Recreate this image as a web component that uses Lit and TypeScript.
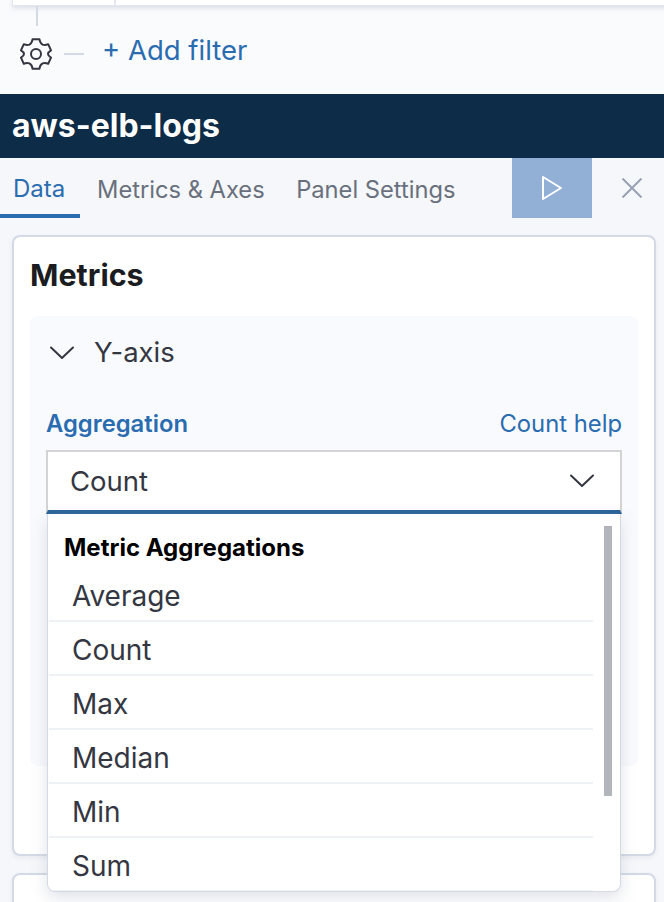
import { LitElement, css, html } from 'lit';
import { customElement } from 'lit/decorators.js';

const chevron = () => html`<svg viewBox="0 0 24 14" fill="none" stroke="currentColor" stroke-width="2" stroke-linecap="round" stroke-linejoin="round">
  <path d="M1 1.5 L12 12 L23 1.5"></path>
</svg>`;

const options = ['Average', 'Count', 'Max', 'Median', 'Min', 'Sum'];

@customElement('app-root')
export class AppRoot extends LitElement {
  static styles = css`
    :host {
      display: block;
      height: 902px;
      overflow: hidden;
      background: #f5f7fa;
      font-family: Inter, 'Liberation Sans', sans-serif;
      color: #343741;
    }

    .top {
      background: #fafbfd;
      height: 94px;
      overflow: hidden;
    }

    .query {
      display: flex;
      height: 5px;
      margin-left: 12px;
      margin-right: -20px;
      background: #ffffff;
      border: 1px solid #e4e7ee;
      border-top: none;
      box-shadow: 0 2px 5px rgba(152, 162, 179, 0.35);
    }

    .query i {
      width: 101px;
      border-right: 2px solid #e4e7ee;
    }

    .stem {
      width: 2px;
      height: 20px;
      margin-left: 36px;
      background: #d3dae6;
    }

    .filters {
      display: flex;
      align-items: center;
      height: 56px;
      padding-left: 20px;
    }

    .gear {
      width: 32px;
      height: 32px;
      color: #343741;
    }

    .dash {
      width: 20px;
      height: 2px;
      margin: 0 18px 0 12px;
      background: #d3dae6;
    }

    .add {
      font-size: 27.5px;
      color: #2a6cb0;
      margin-top: -8px;
    }

    .title {
      box-sizing: border-box;
      height: 64px;
      display: flex;
      align-items: center;
      padding: 0 0 2px 12px;
      background: #0d2c48;
      color: #ffffff;
      font-size: 32px;
      font-weight: 700;
    }

    .tabs {
      display: flex;
      height: 60px;
    }

    .tab {
      display: flex;
      align-items: center;
      height: 60px;
      box-sizing: border-box;
      padding: 2px 16.5px 0 0;
      font-size: 23.7px;
      color: #69707d;
    }

    .tab.active {
      width: 80px;
      padding: 4px 0 0 13px;
      margin-right: 17px;
      font-size: 24px;
      color: #2a6cb0;
      border-bottom: 4px solid #2a6cb0;
    }

    .tab.settings {
      margin-left: 15px;
    }

    .run {
      display: flex;
      align-items: center;
      justify-content: center;
      width: 80px;
      margin-left: auto;
      background: #92b0d6;
    }

    .run svg {
      width: 22px;
      height: 26px;
    }

    .close {
      display: flex;
      align-items: center;
      justify-content: center;
      width: 80px;
      margin-right: -8px;
      color: #98a2b3;
    }

    .close svg {
      width: 20px;
      height: 20px;
    }

    .body {
      position: relative;
      padding: 17px 8px 0 12px;
    }

    .card {
      box-sizing: border-box;
      background: #ffffff;
      border: 2px solid #d3dae6;
      border-radius: 8px;
      box-shadow: 0 2px 4px rgba(152, 162, 179, 0.15);
      padding: 0 16px;
      height: 621px;
    }

    .card + .card {
      margin-top: 17px;
    }

    h2 {
      margin: 0;
      font-size: 30.5px;
      font-weight: 700;
      color: #1a1c21;
    }

    .card > h2 {
      height: 79px;
      line-height: 76px;
    }

    .panel {
      box-sizing: border-box;
      height: 450px;
      padding: 0 16px;
      background: #f9fafd;
      border-radius: 8px;
    }

    .panel-head {
      display: flex;
      align-items: center;
      height: 72px;
      font-size: 27.5px;
    }

    .panel-head svg {
      width: 24px;
      height: 14px;
      margin: 2px 20px 0 4px;
    }

    .row {
      display: flex;
      justify-content: space-between;
      align-items: center;
      height: 62px;
      padding-top: 8px;
      box-sizing: border-box;
      font-size: 23.8px;
      color: #2a6cb0;
    }

    .label {
      font-weight: 600;
    }

    .select {
      box-sizing: border-box;
      display: flex;
      align-items: center;
      justify-content: space-between;
      height: 64px;
      padding: 0 26px 0 22px;
      background: #ffffff;
      border: 2px solid #d3d3d3;
      border-bottom: 4px solid #2a6399;
      font-size: 27.5px;
    }

    .select svg {
      width: 24px;
      height: 14px;
    }

    .menu {
      position: absolute;
      left: 47px;
      top: 296px;
      box-sizing: border-box;
      width: 574px;
      height: 378px;
      padding: 12px 0 0 1px;
      background: #ffffff;
      border: solid #d3dae6;
      border-width: 0 1px 1px 1px;
      border-radius: 0 0 8px 8px;
      box-shadow: 0 6px 16px rgba(152, 162, 179, 0.3);
      overflow: hidden;
    }

    .menu h3 {
      margin: 0 0 0 15px;
      height: 42px;
      line-height: 44px;
      font-size: 24px;
      font-weight: 700;
      color: #000000;
    }

    .option {
      display: flex;
      align-items: center;
      box-sizing: border-box;
      width: 544px;
      height: 54px;
      padding: 4px 0 0 23px;
      font-size: 28px;
      border-bottom: 2px solid #eef1f6;
    }

    .thumb {
      position: absolute;
      right: 8px;
      top: 12px;
      width: 8px;
      height: 270px;
      background: #b2b5bc;
    }

    .next {
      padding-top: 12px;
    }
  `;

  render() {
    return html`
      <div class="top">
        <div class="query"><i></i></div>
        <div class="stem"></div>
        <div class="filters">
          <svg class="gear" viewBox="0 0 32 32" fill="none" stroke="currentColor" stroke-width="2" stroke-linejoin="round">
            <path d="M12.6 1.2 L19.4 1.2 C19.8 4 20.6 5.6 22.6 6.6 C24.6 7.4 26 7.2 28.2 6.2 L31 12.4 C29 13.6 28 14.6 28 16 C28 17.4 29 18.4 31 19.6 L28.2 25.8 C26 24.8 24.6 24.6 22.6 25.4 C20.6 26.4 19.8 28 19.4 30.8 L12.6 30.8 C12.2 28 11.4 26.4 9.4 25.4 C7.4 24.6 6 24.8 3.8 25.8 L1 19.6 C3 18.4 4 17.4 4 16 C4 14.6 3 13.6 1 12.4 L3.8 6.2 C6 7.2 7.4 7.4 9.4 6.6 C11.4 5.6 12.2 4 12.6 1.2 Z"></path>
            <circle cx="16" cy="16" r="5"></circle>
          </svg>
          <span class="dash"></span>
          <span class="add">+ Add filter</span>
        </div>
      </div>
      <div class="title">aws-elb-logs</div>
      <div class="tabs">
        <div class="tab active">Data</div>
        <div class="tab">Metrics &amp; Axes</div>
        <div class="tab settings">Panel Settings</div>
        <div class="run">
          <svg viewBox="0 0 22 26" fill="none" stroke="#ffffff" stroke-width="2" stroke-linejoin="round">
            <path d="M2 2 V24 L20 13 Z"></path>
          </svg>
        </div>
        <div class="close">
          <svg viewBox="0 0 20 20" fill="none" stroke="currentColor" stroke-width="2">
            <path d="M0.5 0.5 L19.5 19.5 M19.5 0.5 L0.5 19.5"></path>
          </svg>
        </div>
      </div>
      <div class="body">
        <section class="card">
          <h2>Metrics</h2>
          <div class="panel">
            <div class="panel-head">${chevron()}<span>Y-axis</span></div>
            <div class="row"><span class="label">Aggregation</span><span>Count help</span></div>
            <div class="select"><span>Count</span>${chevron()}</div>
          </div>
        </section>
        <section class="card">
          <h2 class="next">Buckets</h2>
        </section>
        <div class="menu">
          <h3>Metric Aggregations</h3>
          ${options.map((o) => html`<div class="option">${o}</div>`)}
          <div class="thumb"></div>
        </div>
      </div>
    `;
  }
}
